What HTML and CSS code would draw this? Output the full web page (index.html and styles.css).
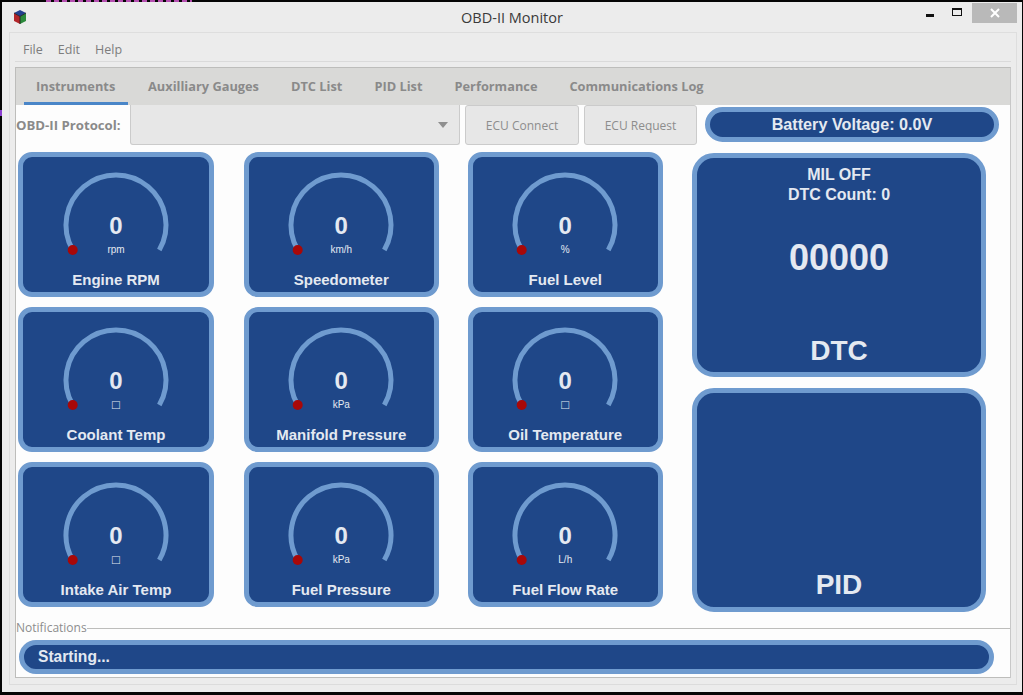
FILE: index.html
```html
<!DOCTYPE html>
<html lang="en">
<head>
    <meta charset="UTF-8">
    <title>OBD-II Monitor</title>
    <link rel="stylesheet" href="styles.css">
</head>
<body>
    <span class="deskText"></span>
    <span class="deskMark"></span>
    <svg class="defs" width="0" height="0">
        <symbol id="dial" viewBox="0 0 120 100">
            <path d="M16.7 85 A50 50 0 1 1 103.3 85" fill="none" stroke="#6f9bcf" stroke-width="5"/>
            <circle cx="16.7" cy="85" r="5" fill="#a80808"/>
        </symbol>
    </svg>
    <div class="window">
        <div class="titleBar">
            <svg class="appIcon" width="14" height="16" viewBox="0 0 14 16">
                <path d="M7 1 L13 4 L7 7.5 L1 4 Z" fill="#23408f"/>
                <path d="M1 4 L7 7.5 V15 L1 12 Z" fill="#b3262a"/>
                <path d="M13 4 L7 7.5 V15 L13 12 Z" fill="#2c8a3c"/>
                <path d="M7 7.5 V15 M1 4 L7 7.5 L13 4" fill="none" stroke="#1a1a1a" stroke-width="0.8"/>
            </svg>
            <span class="titleText">OBD-II Monitor</span>
            <div class="winBtns">
                <span class="winBtn"><i class="minIcon"></i></span>
                <span class="winBtn"><i class="maxIcon"></i></span>
                <span class="closeBtn">
                    <svg width="10" height="10" viewBox="0 0 10 10"><path d="M1 1 L9 9 M9 1 L1 9" stroke="#fff" stroke-width="2"/></svg>
                </span>
            </div>
        </div>
        <div class="frame">
            <div class="menuBar">
                <span>File</span>
                <span>Edit</span>
                <span>Help</span>
            </div>
            <div class="pane">
                <div class="tabBar">
                    <span class="tab active">Instruments</span>
                    <span class="tab">Auxilliary Gauges</span>
                    <span class="tab">DTC List</span>
                    <span class="tab">PID List</span>
                    <span class="tab">Performance</span>
                    <span class="tab">Communications Log</span>
                </div>
                <div class="toolBar">
                    <label class="protoLabel">OBD-II Protocol:</label>
                    <div class="combo"><i class="comboArrow"></i></div>
                    <button class="ecuBtn">ECU Connect</button>
                    <button class="ecuBtn">ECU Request</button>
                    <div class="pill battery">Battery Voltage: 0.0V</div>
                </div>
                <div class="mainArea">
                    <div class="gaugeGrid">
                        <div class="card">
                            <div class="gauge">
                                <svg class="dial"><use href="#dial"/></svg>
                                <div class="readout"><b>0</b><small>rpm</small></div>
                            </div>
                            <div class="cardTitle">Engine RPM</div>
                        </div>
                        <div class="card">
                            <div class="gauge">
                                <svg class="dial"><use href="#dial"/></svg>
                                <div class="readout"><b>0</b><small>km/h</small></div>
                            </div>
                            <div class="cardTitle">Speedometer</div>
                        </div>
                        <div class="card">
                            <div class="gauge">
                                <svg class="dial"><use href="#dial"/></svg>
                                <div class="readout"><b>0</b><small>%</small></div>
                            </div>
                            <div class="cardTitle">Fuel Level</div>
                        </div>
                        <div class="card">
                            <div class="gauge">
                                <svg class="dial"><use href="#dial"/></svg>
                                <div class="readout"><b>0</b><small class="tofu">□</small></div>
                            </div>
                            <div class="cardTitle">Coolant Temp</div>
                        </div>
                        <div class="card">
                            <div class="gauge">
                                <svg class="dial"><use href="#dial"/></svg>
                                <div class="readout"><b>0</b><small>kPa</small></div>
                            </div>
                            <div class="cardTitle">Manifold Pressure</div>
                        </div>
                        <div class="card">
                            <div class="gauge">
                                <svg class="dial"><use href="#dial"/></svg>
                                <div class="readout"><b>0</b><small class="tofu">□</small></div>
                            </div>
                            <div class="cardTitle">Oil Temperature</div>
                        </div>
                        <div class="card">
                            <div class="gauge">
                                <svg class="dial"><use href="#dial"/></svg>
                                <div class="readout"><b>0</b><small class="tofu">□</small></div>
                            </div>
                            <div class="cardTitle">Intake Air Temp</div>
                        </div>
                        <div class="card">
                            <div class="gauge">
                                <svg class="dial"><use href="#dial"/></svg>
                                <div class="readout"><b>0</b><small>kPa</small></div>
                            </div>
                            <div class="cardTitle">Fuel Pressure</div>
                        </div>
                        <div class="card">
                            <div class="gauge">
                                <svg class="dial"><use href="#dial"/></svg>
                                <div class="readout"><b>0</b><small>L/h</small></div>
                            </div>
                            <div class="cardTitle">Fuel Flow Rate</div>
                        </div>
                    </div>
                    <div class="sideCol">
                        <div class="bigPanel">
                            <div class="milText">MIL OFF<br>DTC Count: 0</div>
                            <div class="dtcCode">00000</div>
                            <div class="bigTitle">DTC</div>
                        </div>
                        <div class="bigPanel">
                            <div class="bigTitle">PID</div>
                        </div>
                    </div>
                </div>
                <fieldset class="notify">
                    <legend>Notifications</legend>
                    <div class="pill status">Starting...</div>
                </fieldset>
            </div>
        </div>
    </div>
</body>
</html>
```

FILE: styles.css
```css
html, body{
    margin: 0;
    height: 695px;
    overflow: hidden;
}
body{
    background: #050505;
    padding: 2px 1px 3px 2px;
    box-sizing: border-box;
    font-family: "Open Sans", sans-serif;
    position: relative;
}
.defs{
    position: absolute;
}
.deskText{
    position: absolute;
    left: 46px;
    top: 0;
    width: 146px;
    height: 2px;
    background: repeating-linear-gradient(90deg, #b54fb0 0 5px, #050505 5px 8px);
}
.deskMark{
    position: absolute;
    left: 0;
    top: 110px;
    width: 2px;
    height: 6px;
    background: #8a3fd0;
}
.window{
    height: 100%;
    background: #ececec;
    display: flex;
    flex-direction: column;
}

/* title bar */
.titleBar{
    height: 30px;
    flex: none;
    position: relative;
    display: flex;
    align-items: center;
    justify-content: center;
}
.appIcon{
    position: absolute;
    left: 11px;
    top: 7px;
}
.titleText{
    font-size: 14.5px;
    color: #3a3a3a;
    margin-top: 1px;
}
.winBtns{
    position: absolute;
    right: 5px;
    top: 1px;
    display: flex;
}
.winBtn{
    width: 27px;
    height: 20px;
    display: flex;
    align-items: center;
    justify-content: center;
}
.minIcon{
    width: 8px;
    height: 3px;
    background: #111;
    margin-top: 5px;
}
.maxIcon{
    width: 8px;
    height: 5px;
    border: 1px solid #111;
    border-top-width: 2px;
    margin-top: -3px;
}
.closeBtn{
    width: 45px;
    height: 20px;
    margin-left: 2px;
    background: #b9b9b9;
    display: flex;
    align-items: center;
    justify-content: center;
}

/* frame, menu */
.frame{
    flex: 1;
    margin: 0 5px 7px 7px;
    border: 1px solid #dedede;
    border-bottom-color: #dcdcdc;
    display: flex;
    flex-direction: column;
    padding: 0 5px 0 5px;
}
.menuBar{
    height: 29px;
    flex: none;
    display: flex;
    align-items: center;
    gap: 15px;
    padding: 5px 0 0 8px;
    box-sizing: border-box;
    border-bottom: 1px solid #dadada;
    margin-bottom: 5px;
    font-size: 12.5px;
    color: #7d7d7d;
}

/* tabs */
.pane{
    background: #fdfdfd;
    border: 1px solid #bdbdbb;
    border-bottom: none;
    border-right: 1px solid #c8c8c8;
}
.tabBar{
    height: 37px;
    background: #d9d9d7;
    display: flex;
    gap: 8px;
    padding-left: 8px;
    box-sizing: border-box;
}
.tab{
    padding: 0 12px 3px;
    line-height: 37px;
    font-family: "Open Sans", sans-serif;
    font-weight: bold;
    font-size: 12.8px;
    color: #8a8a8a;
    white-space: nowrap;
}
.tab.active{
    border-bottom: 3px solid #4a86c8;
    padding-bottom: 0;
    line-height: 37px;
    height: 34px;
    width: 80px;
}

/* toolbar */
.toolBar{
    height: 40px;
    display: flex;
    align-items: flex-start;
}
.protoLabel{
    width: 114px;
    line-height: 40px;
    font-family: "Open Sans", sans-serif;
    font-weight: bold;
    font-size: 13.2px;
    color: #8a8a8a;
    white-space: nowrap;
}
.combo{
    width: 330px;
    height: 40px;
    box-sizing: border-box;
    background: #e7e7e7;
    border: 1px solid #cbcbcb;
    border-top: none;
    border-radius: 0 0 3px 3px;
    position: relative;
}
.comboArrow{
    position: absolute;
    right: 11px;
    top: 17px;
    border-left: 5px solid transparent;
    border-right: 5px solid transparent;
    border-top: 6px solid #8f8f8f;
}
.ecuBtn{
    width: 114px;
    height: 40px;
    margin-left: 5px;
    background: #e7e7e7;
    border: 1px solid #cbcbcb;
    border-radius: 3px;
    font-family: "Open Sans", sans-serif;
    font-size: 12px;
    color: #8d8d8d;
    padding: 0;
}
.ecuBtn + .ecuBtn{
    width: 113px;
}

/* pills */
.pill{
    background: #1f4788;
    border: 5px solid #6f9bcf;
    box-sizing: border-box;
    border-radius: 18px;
    color: #e4e9f1;
    font-family: "Liberation Sans", sans-serif;
    font-weight: bold;
    font-size: 16px;
}
.battery{
    width: 294px;
    height: 35px;
    margin: 2px 0 0 8px;
    line-height: 25px;
    text-align: center;
    font-size: 16.2px;
}
.status{
    width: 975px;
    height: 34px;
    margin-left: 3px;
    line-height: 24px;
    padding-left: 14px;
    font-size: 15.6px;
}

/* gauges */
.mainArea{
    display: flex;
    padding: 7px 0 9px 2px;
}
.gaugeGrid{
    display: grid;
    grid-template-columns: 225.5px 224px 224.5px;
    grid-auto-rows: 145px;
    row-gap: 10px;
}
.card{
    width: 195.5px;
    box-sizing: border-box;
    background: #1f4788;
    border: 5px solid #6f9bcf;
    border-radius: 14px;
    padding-top: 8px;
    color: #e4e9f1;
    font-family: "Liberation Sans", sans-serif;
    text-align: center;
}
.card:nth-child(3n+1){
    width: 196px;
}
.gauge{
    display: grid;
    width: 120px;
    height: 100px;
    margin: 0 auto;
}
.dial, .readout{
    grid-area: 1 / 1;
    width: 120px;
    height: 100px;
}
.readout{
    padding-top: 47px;
    box-sizing: border-box;
}
.readout b{
    display: block;
    font-size: 24px;
    line-height: 27px;
}
.readout small{
    display: block;
    font-size: 10px;
    line-height: 10px;
    margin-top: 6px;
}
.readout .tofu{
    font-size: 13px;
}
.cardTitle{
    font-size: 15px;
    font-weight: bold;
    line-height: 18px;
    margin-top: 6px;
    white-space: nowrap;
}

/* right side */
.sideCol{
    width: 294px;
    display: flex;
    flex-direction: column;
    gap: 11px;
    padding-top: 1px;
}
.bigPanel{
    height: 224px;
    box-sizing: border-box;
    background: #1f4788;
    border: 5px solid #6f9bcf;
    border-radius: 22px;
    color: #e4e9f1;
    font-family: "Liberation Sans", sans-serif;
    font-weight: bold;
    text-align: center;
    display: flex;
    flex-direction: column;
}
.milText{
    font-size: 16px;
    line-height: 20px;
    margin-top: 7px;
}
.dtcCode{
    font-size: 36px;
    line-height: 40px;
    margin-top: 33px;
}
.bigTitle{
    font-size: 28px;
    line-height: 32px;
    margin-top: auto;
    margin-bottom: 5px;
}
.bigPanel + .bigPanel .bigTitle{
    margin-bottom: 6px;
}

/* notifications */
.notify{
    margin: 0;
    padding: 0 0 3px;
    border: none;
    border-top: 1px solid #bdbdbb;
    border-bottom: 1px solid #bdbdbb;
}
.notify legend{
    padding: 0;
    font-size: 12px;
    line-height: 14px;
    color: #8d8d8d;
}
.notify .status{
    margin-top: 5px;
}
```
